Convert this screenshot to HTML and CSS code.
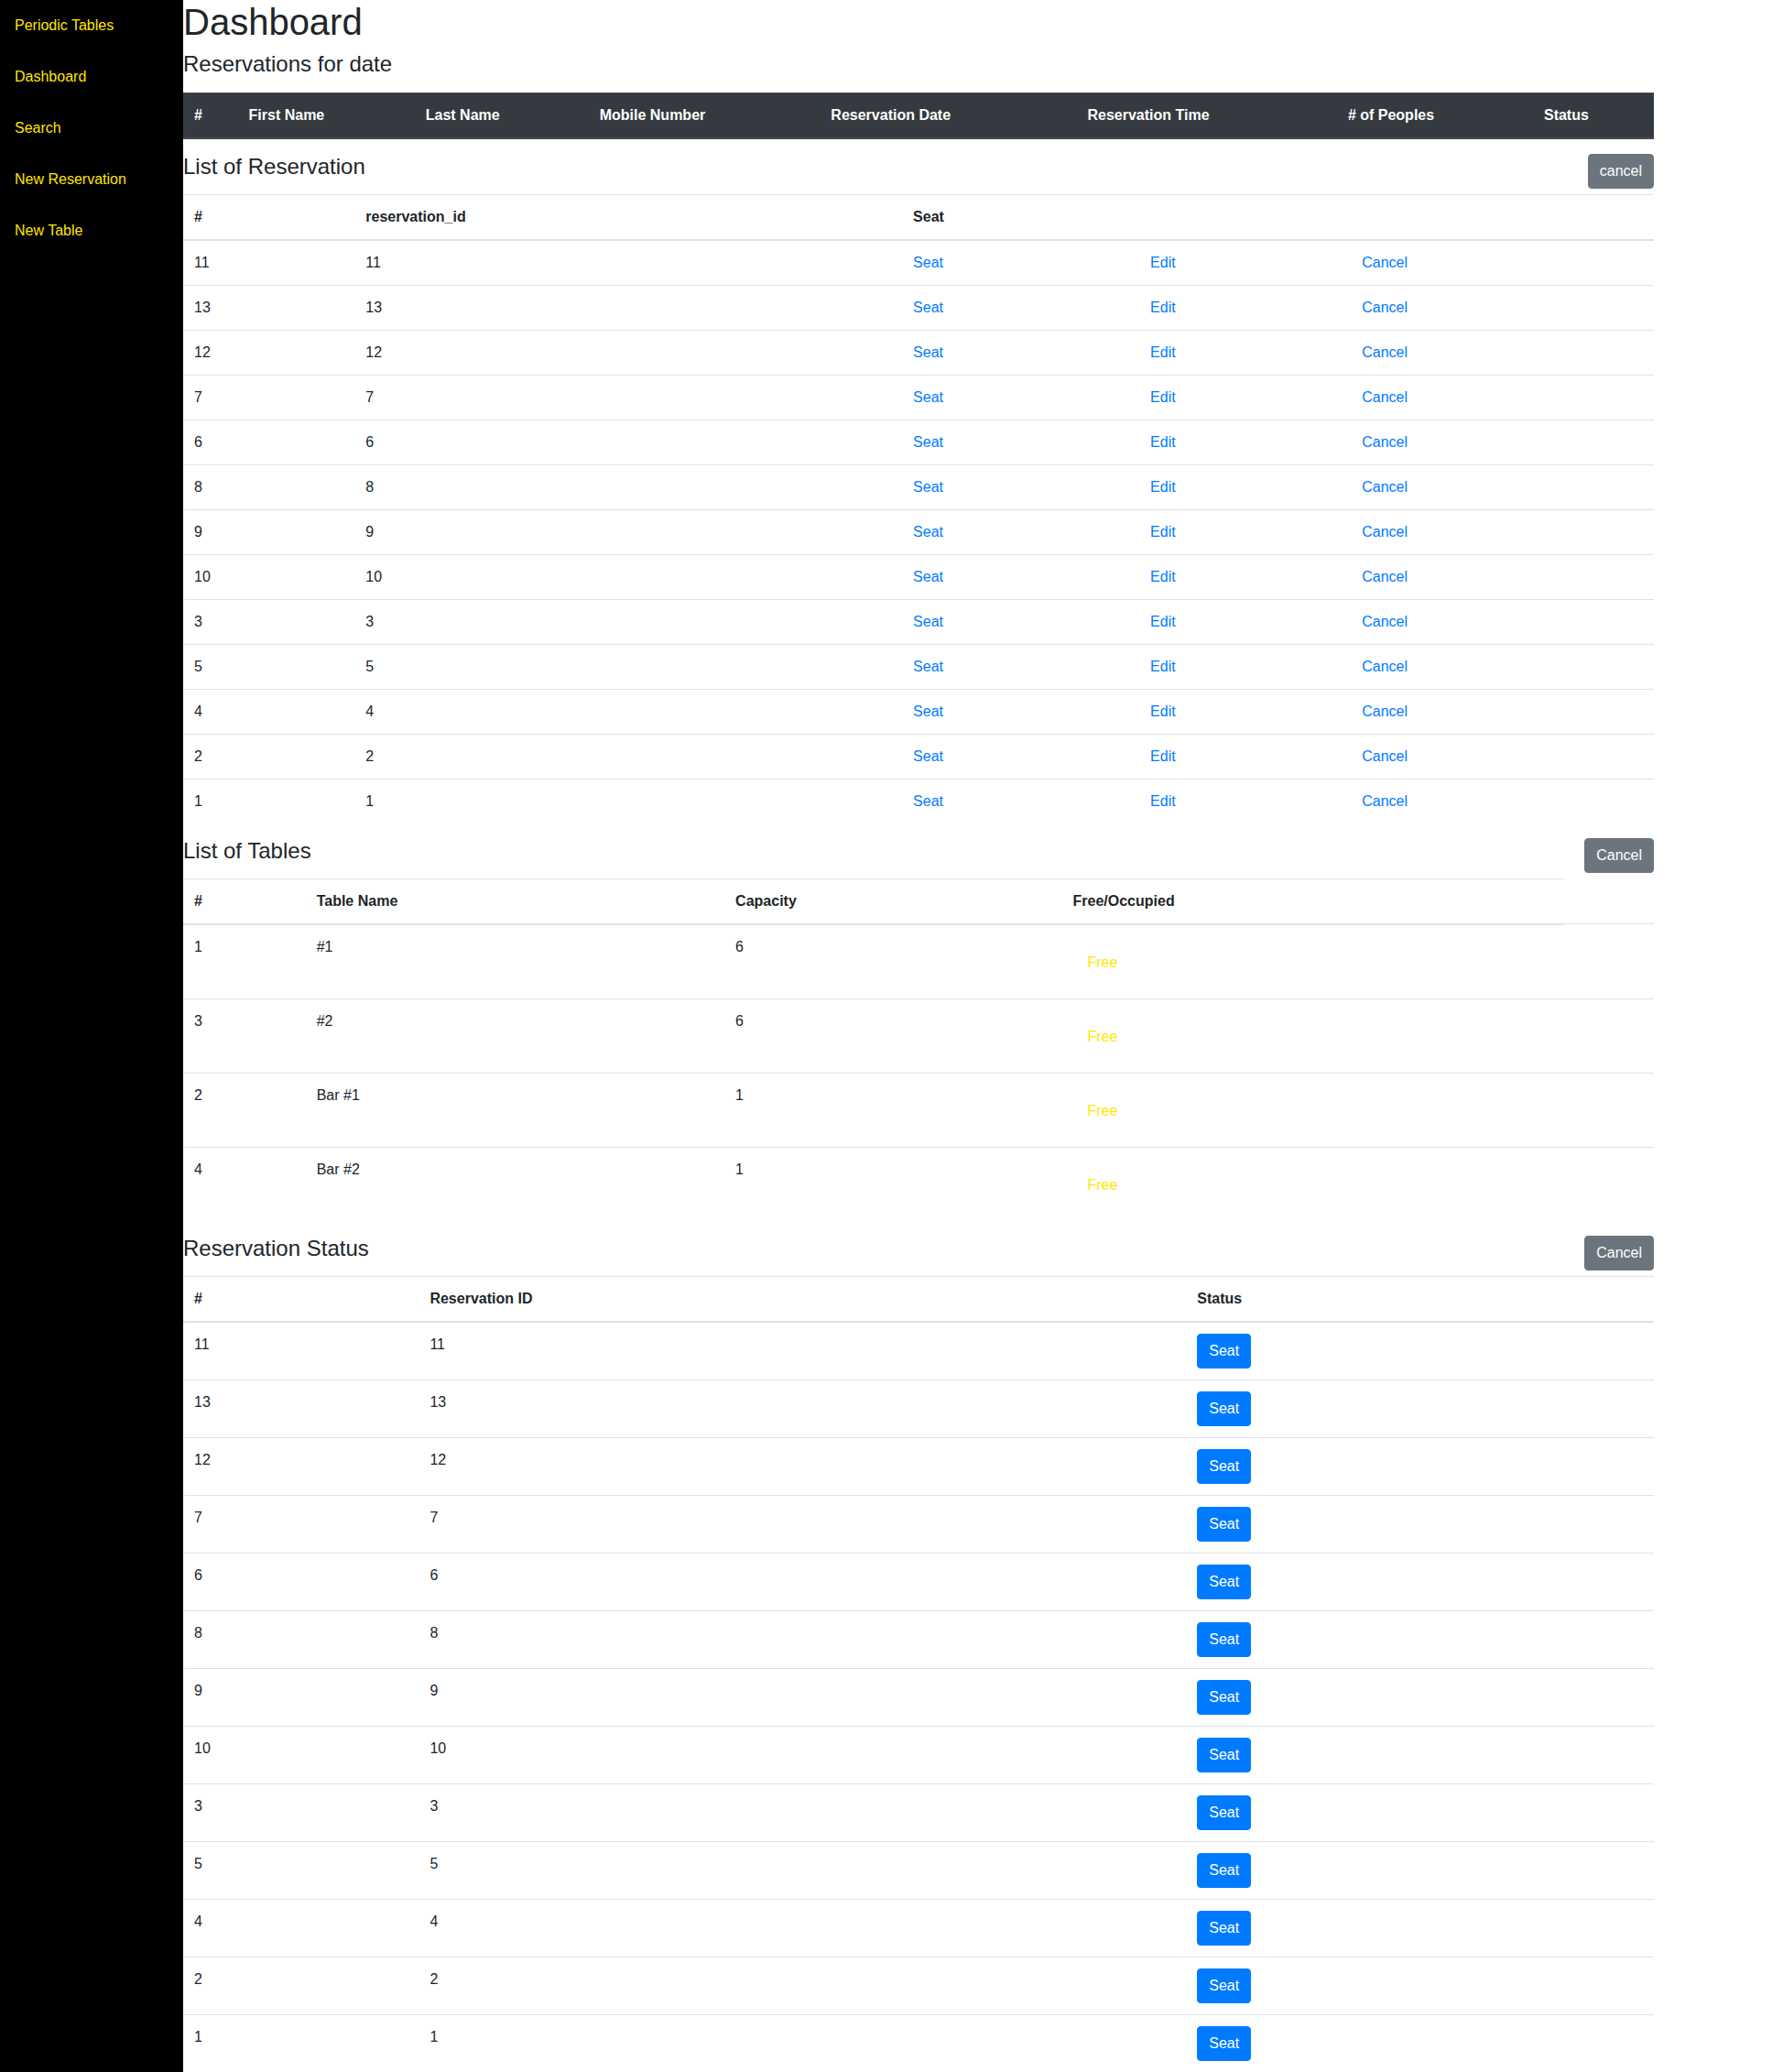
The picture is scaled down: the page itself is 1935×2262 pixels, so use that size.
FILE: index.html
```html
<!DOCTYPE html>
<html lang="en">
<head>
<meta charset="utf-8">
<title>Dashboard</title>
<link rel="stylesheet" href="styles.css">
</head>
<body>
<div class="layout">
  <nav class="sidebar">
    <a class="nav-link" href="#">Periodic Tables</a>
    <a class="nav-link" href="#">Dashboard</a>
    <a class="nav-link" href="#">Search</a>
    <a class="nav-link" href="#">New Reservation</a>
    <a class="nav-link" href="#">New Table</a>
  </nav>
  <main class="main">
    <h1 class="page-title">Dashboard</h1>
    <h4 class="subtitle">Reservations for date</h4>
    <table class="table">
      <thead class="thead-dark">
        <tr><th>#</th><th>First Name</th><th>Last Name</th><th>Mobile Number</th><th>Reservation Date</th><th>Reservation Time</th><th># of Peoples</th><th>Status</th></tr>
      </thead>
    </table>

    <div class="section-head">
      <h4 class="section-title">List of Reservation</h4>
      <button class="btn btn-secondary">cancel</button>
    </div>
    <table class="table">
      <thead>
        <tr><th>#</th><th>reservation_id</th><th>Seat</th><th></th><th></th></tr>
      </thead>
      <tbody>
        <tr><td>11</td><td>11</td><td><a href="#">Seat</a></td><td><a href="#">Edit</a></td><td><a href="#">Cancel</a></td></tr>
        <tr><td>13</td><td>13</td><td><a href="#">Seat</a></td><td><a href="#">Edit</a></td><td><a href="#">Cancel</a></td></tr>
        <tr><td>12</td><td>12</td><td><a href="#">Seat</a></td><td><a href="#">Edit</a></td><td><a href="#">Cancel</a></td></tr>
        <tr><td>7</td><td>7</td><td><a href="#">Seat</a></td><td><a href="#">Edit</a></td><td><a href="#">Cancel</a></td></tr>
        <tr><td>6</td><td>6</td><td><a href="#">Seat</a></td><td><a href="#">Edit</a></td><td><a href="#">Cancel</a></td></tr>
        <tr><td>8</td><td>8</td><td><a href="#">Seat</a></td><td><a href="#">Edit</a></td><td><a href="#">Cancel</a></td></tr>
        <tr><td>9</td><td>9</td><td><a href="#">Seat</a></td><td><a href="#">Edit</a></td><td><a href="#">Cancel</a></td></tr>
        <tr><td>10</td><td>10</td><td><a href="#">Seat</a></td><td><a href="#">Edit</a></td><td><a href="#">Cancel</a></td></tr>
        <tr><td>3</td><td>3</td><td><a href="#">Seat</a></td><td><a href="#">Edit</a></td><td><a href="#">Cancel</a></td></tr>
        <tr><td>5</td><td>5</td><td><a href="#">Seat</a></td><td><a href="#">Edit</a></td><td><a href="#">Cancel</a></td></tr>
        <tr><td>4</td><td>4</td><td><a href="#">Seat</a></td><td><a href="#">Edit</a></td><td><a href="#">Cancel</a></td></tr>
        <tr><td>2</td><td>2</td><td><a href="#">Seat</a></td><td><a href="#">Edit</a></td><td><a href="#">Cancel</a></td></tr>
        <tr><td>1</td><td>1</td><td><a href="#">Seat</a></td><td><a href="#">Edit</a></td><td><a href="#">Cancel</a></td></tr>
      </tbody>
    </table>

    <div class="section-head">
      <h4 class="section-title">List of Tables</h4>
      <button class="btn btn-secondary">Cancel</button>
    </div>
    <table class="table">
      <thead>
        <tr><th>#</th><th>Table Name</th><th>Capacity</th><th>Free/Occupied</th></tr>
      </thead>
      <tbody>
        <tr><td>1</td><td>#1</td><td>6</td><td><span class="free">Free</span></td><td></td></tr>
        <tr><td>3</td><td>#2</td><td>6</td><td><span class="free">Free</span></td><td></td></tr>
        <tr><td>2</td><td>Bar #1</td><td>1</td><td><span class="free">Free</span></td><td></td></tr>
        <tr><td>4</td><td>Bar #2</td><td>1</td><td><span class="free">Free</span></td><td></td></tr>
      </tbody>
    </table>

    <div class="section-head">
      <h4 class="section-title">Reservation Status</h4>
      <button class="btn btn-secondary">Cancel</button>
    </div>
    <table class="table">
      <thead>
        <tr><th>#</th><th>Reservation ID</th><th>Status</th></tr>
      </thead>
      <tbody>
        <tr><td>11</td><td>11</td><td><button class="btn btn-primary">Seat</button></td></tr>
        <tr><td>13</td><td>13</td><td><button class="btn btn-primary">Seat</button></td></tr>
        <tr><td>12</td><td>12</td><td><button class="btn btn-primary">Seat</button></td></tr>
        <tr><td>7</td><td>7</td><td><button class="btn btn-primary">Seat</button></td></tr>
        <tr><td>6</td><td>6</td><td><button class="btn btn-primary">Seat</button></td></tr>
        <tr><td>8</td><td>8</td><td><button class="btn btn-primary">Seat</button></td></tr>
        <tr><td>9</td><td>9</td><td><button class="btn btn-primary">Seat</button></td></tr>
        <tr><td>10</td><td>10</td><td><button class="btn btn-primary">Seat</button></td></tr>
        <tr><td>3</td><td>3</td><td><button class="btn btn-primary">Seat</button></td></tr>
        <tr><td>5</td><td>5</td><td><button class="btn btn-primary">Seat</button></td></tr>
        <tr><td>4</td><td>4</td><td><button class="btn btn-primary">Seat</button></td></tr>
        <tr><td>2</td><td>2</td><td><button class="btn btn-primary">Seat</button></td></tr>
        <tr><td>1</td><td>1</td><td><button class="btn btn-primary">Seat</button></td></tr>
      </tbody>
    </table>
  </main>
</div>
</body>
</html>
```
FILE: styles.css
```css
* { box-sizing: border-box; }

html, body {
  margin: 0;
  padding: 0;
}

body {
  font-family: "Liberation Sans", Arial, sans-serif;
  font-size: 16px;
  line-height: 1.5;
  color: #212529;
  background: #fff;
}

.layout {
  display: flex;
  align-items: stretch;
  min-height: 100vh;
}

.sidebar {
  width: 200px;
  flex: 0 0 200px;
  background: #000;
  display: flex;
  flex-direction: column;
}

.nav-link {
  display: block;
  padding: 16px;
  line-height: 24px;
  color: #ffe600;
  text-decoration: none;
}

.main {
  width: 1606px;
  flex: 0 0 1606px;
}

.page-title {
  margin: 0 0 8px;
  font-size: 40px;
  font-weight: 500;
  line-height: 1.2;
}

.subtitle {
  margin: 0 0 16px;
  font-size: 24px;
  font-weight: 500;
  line-height: 1.2;
}

.table {
  width: 100%;
  margin-bottom: 16px;
  border-collapse: collapse;
  color: #212529;
}

.table th,
.table td {
  padding: 12px;
  vertical-align: top;
  border-top: 1px solid #dee2e6;
  text-align: left;
  line-height: 24px;
}

.table th {
  font-weight: 700;
}

.table thead th {
  vertical-align: bottom;
  border-bottom: 2px solid #dee2e6;
}

.thead-dark th {
  color: #fff;
  background: #343a40;
  border-color: #454d55 !important;
}

.table a {
  color: #007bff;
  text-decoration: none;
}

.section-head {
  display: flex;
  justify-content: space-between;
  align-items: flex-start;
  margin-bottom: 6px;
}

.section-title {
  margin: 0;
  font-size: 24px;
  font-weight: 500;
  line-height: 1.2;
}

.btn {
  display: inline-block;
  font-family: inherit;
  font-weight: 400;
  font-size: 16px;
  line-height: 24px;
  padding: 6px 12px;
  border: 1px solid transparent;
  border-radius: 4px;
  color: #fff;
  cursor: pointer;
}

.btn-secondary {
  background: #6c757d;
  border-color: #6c757d;
}

.btn-primary {
  background: #007bff;
  border-color: #007bff;
}

.free {
  display: block;
  padding: 17px 16px 15px;
  line-height: 24px;
  color: #ffe600;
}
```
